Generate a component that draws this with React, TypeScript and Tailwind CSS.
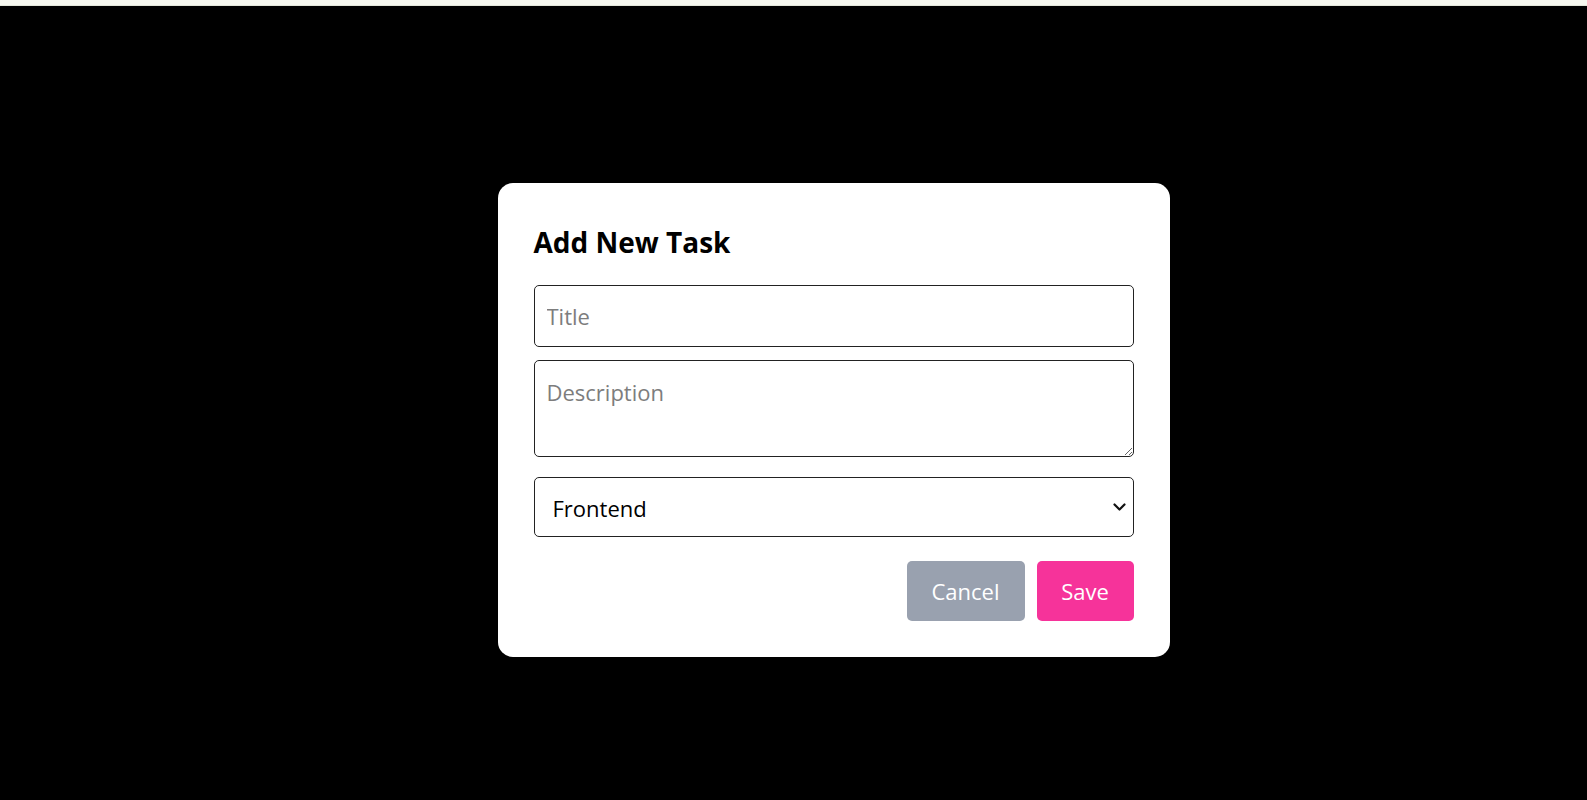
import { useState } from "react";

const categories = ["Frontend", "Backend", "Design", "DevOps"];

export default function App() {
  const [title, setTitle] = useState("");
  const [description, setDescription] = useState("");
  const [category, setCategory] = useState(categories[0]);

  return (
    <div className="min-h-screen bg-black font-['Open_Sans','Noto_Sans',sans-serif]">
      {/* page peeking out above the overlay */}
      <div className="h-[6px] bg-[#f6f8f0] border-b border-[#e3e7da]" />

      {/* Overlay */}
      <div className="flex justify-center pl-[80px] pt-[177px]">
        <div className="w-[672px] rounded-[15px] bg-white p-9">
          <h2 className="mb-[25px] pt-[5px] text-[28px] leading-[36px] font-bold text-black">
            Add New Task
          </h2>

          <div className="flex flex-col">
            <input
              type="text"
              value={title}
              onChange={(e) => setTitle(e.target.value)}
              placeholder="Title"
              className="mb-[13px] h-[62px] w-full rounded-[5px] border border-[#222] px-3 text-[22px] text-black outline-none placeholder:text-[#7d7d7d]"
            />
            <textarea
              value={description}
              onChange={(e) => setDescription(e.target.value)}
              placeholder="Description"
              className="mb-[20px] h-[97px] w-full rounded-[5px] border border-[#222] px-3 pt-[16px] text-[22px] leading-[30px] text-black outline-none placeholder:text-[#7d7d7d]"
            />
            <div className="relative">
              <select
                value={category}
                onChange={(e) => setCategory(e.target.value)}
                className="h-[60px] w-full appearance-none rounded-[5px] border border-[#222] pl-[18px] pt-[2px] text-[22px] text-black outline-none"
              >
                {categories.map((c) => (
                  <option key={c} value={c}>
                    {c}
                  </option>
                ))}
              </select>
              <svg
                className="pointer-events-none absolute right-[8px] top-1/2 h-[8px] w-[13px] -translate-y-1/2"
                viewBox="0 0 13 8"
                fill="none"
                stroke="#111"
                strokeWidth="2.2"
                strokeLinecap="round"
                strokeLinejoin="round"
              >
                <path d="M1.5 1.5 6.5 6.5 11.5 1.5" />
              </svg>
            </div>

            <div className="mt-[24px] flex justify-end gap-3">
              <button
                type="button"
                className="h-[60px] w-[118px] rounded-[5px] bg-gray-400 text-[22px] text-white"
              >
                Cancel
              </button>
              <button
                type="button"
                className="h-[60px] w-[97px] rounded-[5px] bg-pink-500 text-[22px] text-white"
              >
                Save
              </button>
            </div>
          </div>
        </div>
      </div>
    </div>
  );
}
